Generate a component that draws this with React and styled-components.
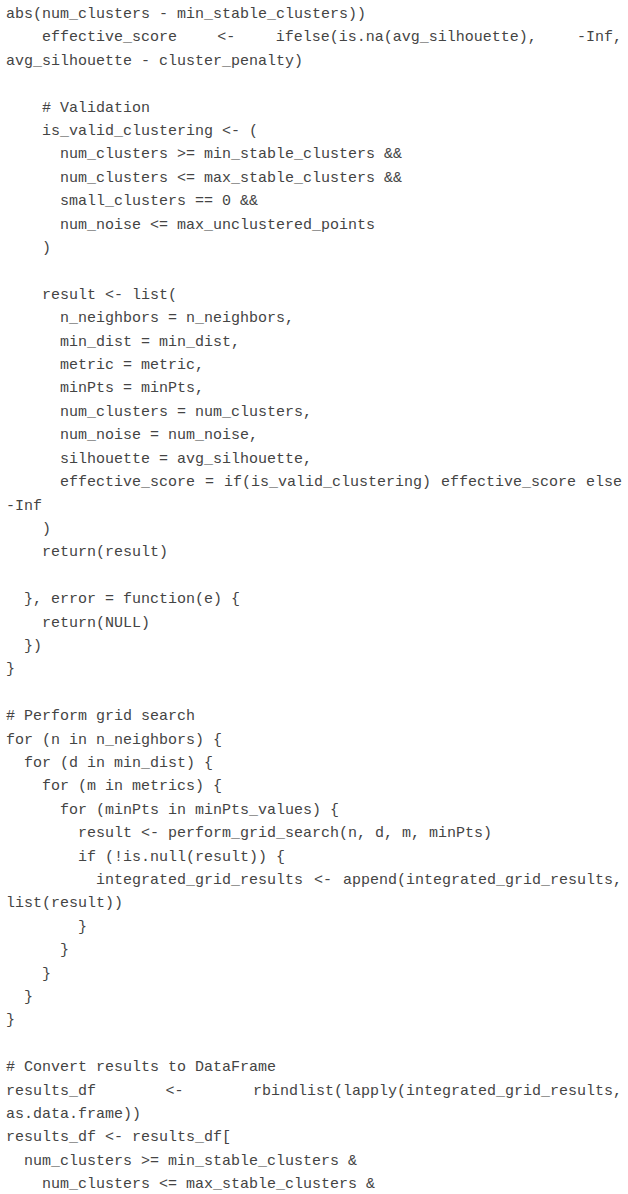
import React from 'react';
import styled, { createGlobalStyle } from 'styled-components';

const source = [
  'abs(num_clusters - min_stable_clusters))',
  '    effective_score <- ifelse(is.na(avg_silhouette), -Inf, avg_silhouette - cluster_penalty)',
  '',
  '    # Validation',
  '    is_valid_clustering <- (',
  '      num_clusters >= min_stable_clusters &&',
  '      num_clusters <= max_stable_clusters &&',
  '      small_clusters == 0 &&',
  '      num_noise <= max_unclustered_points',
  '    )',
  '',
  '    result <- list(',
  '      n_neighbors = n_neighbors,',
  '      min_dist = min_dist,',
  '      metric = metric,',
  '      minPts = minPts,',
  '      num_clusters = num_clusters,',
  '      num_noise = num_noise,',
  '      silhouette = avg_silhouette,',
  '      effective_score = if(is_valid_clustering) effective_score else -Inf',
  '    )',
  '    return(result)',
  '',
  '  }, error = function(e) {',
  '    return(NULL)',
  '  })',
  '}',
  '',
  '# Perform grid search',
  'for (n in n_neighbors) {',
  '  for (d in min_dist) {',
  '    for (m in metrics) {',
  '      for (minPts in minPts_values) {',
  '        result <- perform_grid_search(n, d, m, minPts)',
  '        if (!is.null(result)) {',
  '          integrated_grid_results <- append(integrated_grid_results, list(result))',
  '        }',
  '      }',
  '    }',
  '  }',
  '}',
  '',
  '# Convert results to DataFrame',
  'results_df <- rbindlist(lapply(integrated_grid_results, as.data.frame))',
  'results_df <- results_df[',
  '  num_clusters >= min_stable_clusters &',
  '    num_clusters <= max_stable_clusters &',
];

const GlobalStyle = createGlobalStyle`
  html, body {
    margin: 0;
    padding: 0;
    background: #ffffff;
    overflow: hidden;
  }
`;

const CodeBlock = styled.div`
  padding: 3px 6px 0 6px;
  font-family: "Liberation Mono", "Courier New", monospace;
  font-size: 15px;
  line-height: 23.4px;
  color: #444;
`;

// one source line; the indent only applies to the first visual line,
// wrapped parts start at the left edge and are justified like the reference
const Line = styled.div`
  min-height: 23.4px;
  text-indent: ${(p) => p.$indent}ch;
  text-align: justify;
  text-align-last: left;
  white-space: normal;
`;

const App = () => {
  return (
    <>
      <GlobalStyle />
      <CodeBlock>
        {source.map((line, i) => {
          const text = line.trimStart();
          const indent = line.length - text.length;
          return (
            <Line key={i} $indent={indent}>
              {text}
            </Line>
          );
        })}
      </CodeBlock>
    </>
  );
};

export default App;
